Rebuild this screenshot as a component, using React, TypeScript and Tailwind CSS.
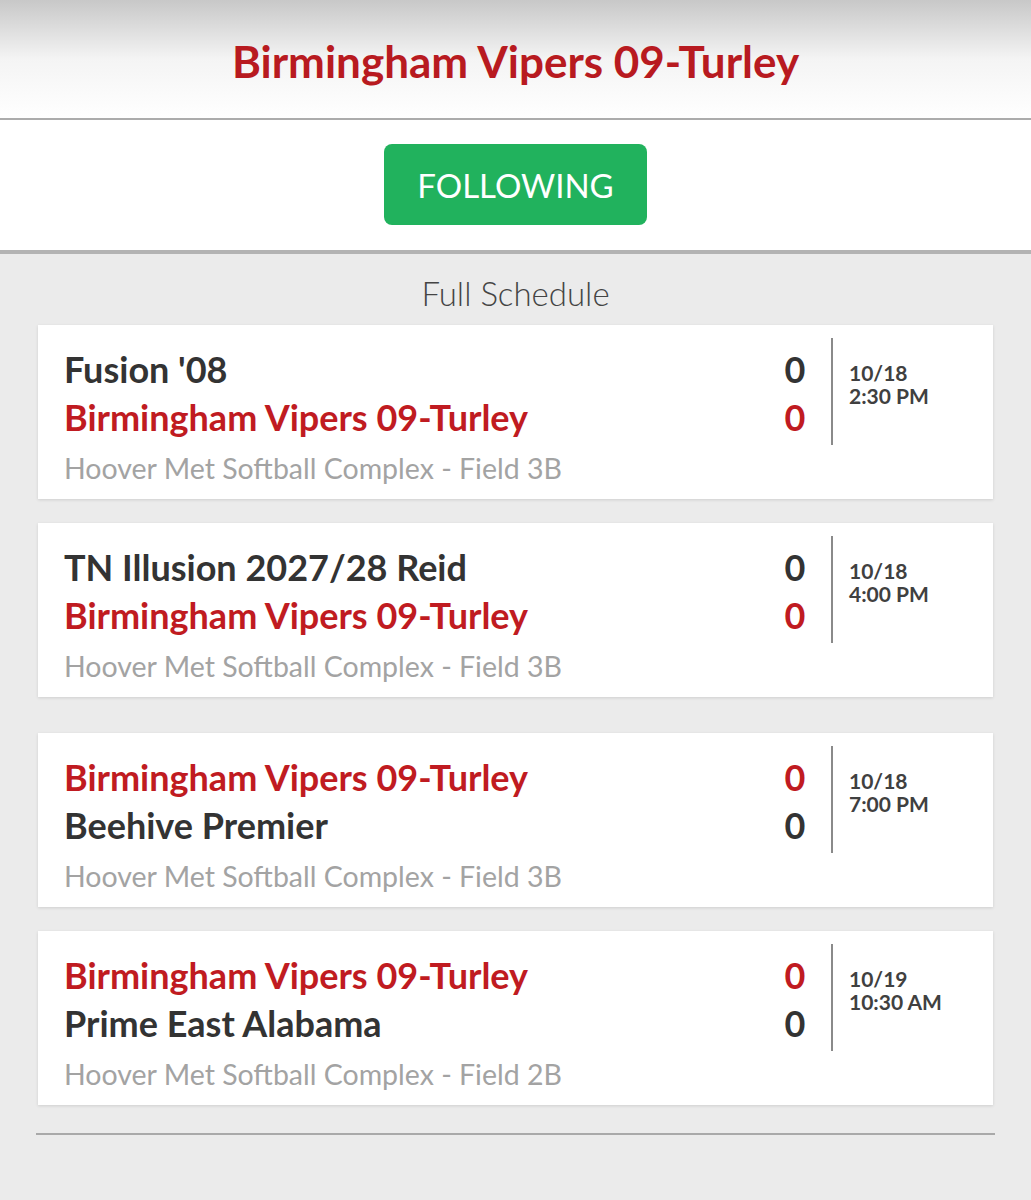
import React from "react";

type Game = {
  home: string;
  away: string;
  homeScore: number;
  awayScore: number;
  homeIsUs: boolean;
  date: string;
  time: string;
  field: string;
  gap: string;
};

const TEAM = "Birmingham Vipers 09-Turley";

const games: Game[] = [
  { home: "Fusion '08", away: TEAM, homeScore: 0, awayScore: 0, homeIsUs: false, date: "10/18", time: "2:30 PM", field: "Hoover Met Softball Complex - Field 3B", gap: "mt-0" },
  { home: "TN Illusion 2027/28 Reid", away: TEAM, homeScore: 0, awayScore: 0, homeIsUs: false, date: "10/18", time: "4:00 PM", field: "Hoover Met Softball Complex - Field 3B", gap: "mt-[24px]" },
  { home: TEAM, away: "Beehive Premier", homeScore: 0, awayScore: 0, homeIsUs: true, date: "10/18", time: "7:00 PM", field: "Hoover Met Softball Complex - Field 3B", gap: "mt-[36px]" },
  { home: TEAM, away: "Prime East Alabama", homeScore: 0, awayScore: 0, homeIsUs: true, date: "10/19", time: "10:30 AM", field: "Hoover Met Softball Complex - Field 2B", gap: "mt-[24px]" },
];

function GameCard({ game }: { game: Game }) {
  const topColor = game.homeIsUs ? "text-[#c01b21]" : "text-[#333333]";
  const bottomColor = game.homeIsUs ? "text-[#333333]" : "text-[#c01b21]";
  return (
    <div className={`${game.gap} mx-[38px] flex h-[174px] bg-white shadow-[0_1px_3px_rgba(0,0,0,0.12)]`}>
      <div className="flex-1 pl-[26px] pt-[20px]">
        <div className={`text-[36px] leading-[48px] font-bold ${topColor}`}>{game.home}</div>
        <div className={`text-[36px] leading-[48px] font-bold ${bottomColor}`}>{game.away}</div>
        <div className="mt-[2px] text-[28.5px] leading-[50px] text-[#a3a3a3]">{game.field}</div>
      </div>
      <div className="w-[40px] pt-[20px] text-center">
        <div className={`text-[36px] leading-[48px] font-bold ${topColor}`}>{game.homeScore}</div>
        <div className={`text-[36px] leading-[48px] font-bold ${bottomColor}`}>{game.awayScore}</div>
      </div>
      <div className="ml-[16px] mt-[13px] h-[107px] w-[2px] bg-[#8a8a8a]" />
      <div className="w-[160px] pl-[16px] pt-[36px] text-[21px] leading-[23px] font-bold text-[#404040]">
        <div>{game.date}</div>
        <div>{game.time}</div>
      </div>
    </div>
  );
}

export default function App() {
  return (
    <div className="min-h-[1200px] w-[1031px] bg-[#ebebeb] font-['Lato','Liberation_Sans',sans-serif]">
      {/* Header */}
      <div className="flex h-[120px] items-center justify-center border-b-2 border-[#acacac] bg-gradient-to-b from-[#c8c8c8] via-[#f4f4f4] to-white pt-[4px]">
        <h1 className="text-[44px] font-bold text-[#b81a20]">{TEAM}</h1>
      </div>

      {/* Follow button */}
      <div className="flex h-[134px] justify-center border-b-[4px] border-[#b3b3b3] bg-white pt-[24px]">
        <button className="h-[81px] w-[263px] rounded-[8px] bg-[#21b25d] pt-[3px] text-[33px] text-white">
          FOLLOWING
        </button>
      </div>

      {/* Schedule */}
      <div className="pt-[19px] text-center text-[33px] leading-[40px] font-light text-[#444444]">Full Schedule</div>
      <div className="mt-[12px]">
        {games.map((g, i) => (
          <GameCard key={i} game={g} />
        ))}
      </div>
      <div className="mx-[36px] mt-[28px] h-[2px] bg-[#a9a9a9]" />
    </div>
  );
}
